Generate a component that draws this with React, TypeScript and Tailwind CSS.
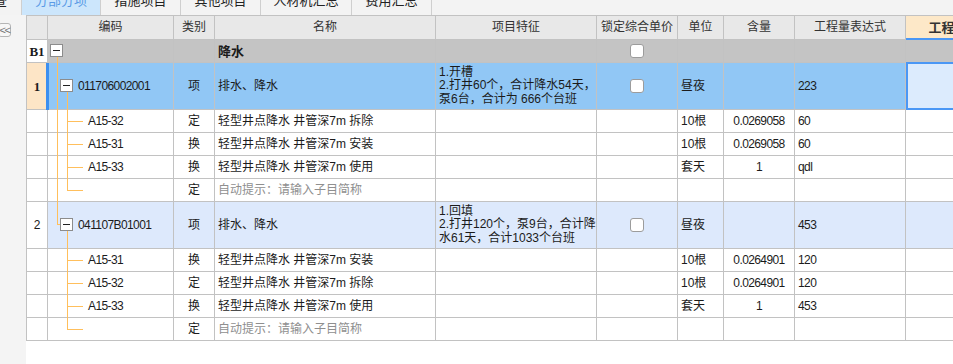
import React from 'react'

const cols = 'grid grid-cols-[21px_126px_41px_221px_161px_81px_46px_71px_111px_84px]'
const line = 'border-r border-b border-[#c2c2c2]'
const mono = "font-['Liberation_Sans','Noto_Sans_CJK_SC',sans-serif] tracking-[-0.6px]"

type Child = { code: string; kind: string; name: string; unit: string; qty: string; expr: string; hint?: boolean }

const group1: Child[] = [
  { code: 'A15-32', kind: '定', name: '轻型井点降水 井管深7m 拆除', unit: '10根', qty: '0.0269058', expr: '60' },
  { code: 'A15-31', kind: '换', name: '轻型井点降水 井管深7m 安装', unit: '10根', qty: '0.0269058', expr: '60' },
  { code: 'A15-33', kind: '换', name: '轻型井点降水 井管深7m 使用', unit: '套天', qty: '1', expr: 'qdl' },
  { code: '', kind: '定', name: '自动提示：请输入子目简称', unit: '', qty: '', expr: '', hint: true },
]

const group2: Child[] = [
  { code: 'A15-31', kind: '换', name: '轻型井点降水 井管深7m 安装', unit: '10根', qty: '0.0264901', expr: '120' },
  { code: 'A15-32', kind: '定', name: '轻型井点降水 井管深7m 拆除', unit: '10根', qty: '0.0264901', expr: '120' },
  { code: 'A15-33', kind: '换', name: '轻型井点降水 井管深7m 使用', unit: '套天', qty: '1', expr: '453' },
  { code: '', kind: '定', name: '自动提示：请输入子目简称', unit: '', qty: '', expr: '', hint: true },
]

const tabs = ['分部分项', '措施项目', '其他项目', '人材机汇总', '费用汇总']

function Toggle({ top, left }: { top: string; left: string }) {
  return (
    <span className={`absolute ${top} ${left} w-[13px] h-[13px] bg-white border border-[#8c8c8c] flex items-center justify-center`}>
      <span className="block w-[7px] h-px bg-[#222]" />
    </span>
  )
}

function Check() {
  return <span className="block w-[14px] h-[14px] bg-white border border-[#9c9c9c] rounded-[3px]" />
}

function ChildRow({ item, last, outer }: { item: Child; last: boolean; outer: boolean }) {
  return (
    <div className={`${cols} h-[23px] bg-white`}>
      <div className={line} />
      <div className={`${line} relative flex items-center pl-[40px] ${mono}`}>
        {outer && <span className="absolute left-[9px] top-0 -bottom-px w-px bg-[#ffbf5c]" />}
        <span className={`absolute left-[19px] top-0 w-px bg-[#ffbf5c] ${last ? 'h-[12px]' : '-bottom-px'}`} />
        <span className="absolute left-[19px] top-[11px] w-[16px] h-px bg-[#ffbf5c]" />
        {item.code}
      </div>
      <div className={`${line} flex items-center justify-center`}>{item.kind}</div>
      <div className={`${line} flex items-center pl-[3px] whitespace-nowrap ${item.hint ? 'text-[#8f8f8f]' : ''}`}>{item.name}</div>
      <div className={line} />
      <div className={line} />
      <div className={`${line} flex items-center pl-[3px]`}>{item.unit}</div>
      <div className={`${line} flex items-center justify-center ${mono}`}>{item.qty}</div>
      <div className={`${line} flex items-center pl-[3px] ${mono}`}>{item.expr}</div>
      <div className={line} />
    </div>
  )
}

function ParentRow({ no, code, feature, expr, selected, outerEnds }: { no: string; code: string; feature: string[]; expr: string; selected: boolean; outerEnds: boolean }) {
  const bg = selected ? 'bg-[#91c7f5]' : 'bg-[#dde9fc]'
  return (
    <div className={`${cols} h-[47px] ${bg}`}>
      <div className={`${line} flex items-center justify-center ${selected ? "bg-[#fde5c6] font-bold font-['Liberation_Serif',serif] text-[13px]" : 'bg-white'}`}>{no}</div>
      <div className={`${line} relative flex items-center pl-[30px] ${mono}`}>
        {selected && <span className="absolute -left-[2px] top-0 -bottom-px w-[3px] bg-[#3c8ff0]" />}
        <span className={`absolute left-[9px] top-0 w-px bg-[#ffbf5c] ${outerEnds ? 'h-[23px]' : '-bottom-px'}`} />
        {outerEnds && <span className="absolute left-[9px] top-[22px] w-[4px] h-px bg-[#ffbf5c]" />}
        <span className="absolute left-[19px] top-[29px] -bottom-px w-px bg-[#ffbf5c]" />
        <Toggle top="top-[16px]" left="left-[12px]" />
        {code}
      </div>
      <div className={`${line} flex items-center justify-center`}>项</div>
      <div className={`${line} flex items-center pl-[3px]`}>排水、降水</div>
      <div className={`${line} flex flex-col justify-center pl-[3px] leading-[13.5px] whitespace-nowrap overflow-hidden`}>
        {feature.map((f) => (
          <span key={f}>{f}</span>
        ))}
      </div>
      <div className={`${line} flex items-center justify-center`}>
        <Check />
      </div>
      <div className={`${line} flex items-center pl-[3px]`}>昼夜</div>
      <div className={line} />
      <div className={`${line} flex items-center pl-[3px] ${mono}`}>{expr}</div>
      {selected ? (
        <div className="border-2 border-[#4a97f5] bg-[#dcebfd] -mt-px" />
      ) : (
        <div className={line} />
      )}
    </div>
  )
}

export default function App() {
  return (
    <div className="w-[953px] h-[364px] overflow-hidden bg-white flex flex-col font-['Liberation_Sans','Noto_Sans_CJK_SC',sans-serif] text-[12px] leading-[15px] text-[#1b1b1b]">
      <div className="h-[15px] shrink-0 flex bg-[#f3f3f3] overflow-hidden text-[13px] leading-[13px] text-[#222]">
        <div className="w-[22px] border-r border-[#cfcfcf] flex justify-end pr-[14px]">
          <span className="block -mt-[6px]">查</span>
        </div>
        {tabs.map((t, i) => (
          <div
            key={t}
            className={`flex justify-center border-r border-[#cfcfcf] ${i === 0 ? 'w-[79px] bg-[#cce6fc] text-[#5a9be6]' : i === 3 ? 'w-[91px]' : 'w-[80px]'}`}
          >
            <span className="block -mt-[6px]">{t}</span>
          </div>
        ))}
      </div>
      <div className="flex flex-1 min-h-0">
        <div className="w-[26px] shrink-0 bg-[#f4f4f4] pt-[8px]">
          <div className="-ml-[2px] w-[13px] h-[14px] border border-[#b5b5b5] rounded-[3px] bg-[#f7f7f7] flex items-center justify-center text-[11px] leading-[11px] text-[#777] tracking-[-1.5px]">
            &lt;&lt;
          </div>
        </div>
        <div className="flex-1 min-w-0 overflow-hidden">
          <div className="border-l border-t border-[#c2c2c2] w-max">
            <div className={`${cols} h-[24px] bg-[#e8e8e8] text-[#333]`}>
              {['', '编码', '类别', '名称', '项目特征', '锁定综合单价', '单位', '含量', '工程量表达式'].map((h, i) => (
                <div key={i} className={`${line} flex items-center justify-center whitespace-nowrap`}>{h}</div>
              ))}
              <div className="border-b-2 border-[#4a97f5] bg-[#fde8c8] flex items-center justify-center font-bold text-[13px] h-[24px]">工程量</div>
            </div>
            <div className={`${cols} h-[23px] bg-[#c4c4c4]`}>
              <div className={`${line} bg-white flex items-center justify-center font-bold font-['Liberation_Serif',serif] text-[13px]`}>B1</div>
              <div className={`${line} relative`}>
                <span className="absolute left-[9px] top-[17px] -bottom-px w-px bg-[#ffbf5c]" />
                <Toggle top="top-[4px]" left="left-[2px]" />
              </div>
              <div className={line} />
              <div className={`${line} flex items-center pl-[3px] font-bold text-[13px]`}>降水</div>
              <div className={line} />
              <div className={`${line} flex items-center justify-center`}>
                <Check />
              </div>
              <div className={line} />
              <div className={line} />
              <div className={line} />
              <div className={line} />
            </div>
            <ParentRow
              no="1"
              code="011706002001"
              feature={['1.开槽', '2.打井60个，合计降水54天，', '泵6台，合计为 666个台班']}
              expr="223"
              selected
              outerEnds={false}
            />
            {group1.map((c, i) => (
              <ChildRow key={i} item={c} last={i === group1.length - 1} outer />
            ))}
            <ParentRow
              no="2"
              code="041107B01001"
              feature={['1.回填', '2.打井120个，泵9台，合计降', '水61天，合计1033个台班']}
              expr="453"
              selected={false}
              outerEnds
            />
            {group2.map((c, i) => (
              <ChildRow key={i} item={c} last={i === group2.length - 1} outer={false} />
            ))}
          </div>
        </div>
      </div>
    </div>
  )
}
